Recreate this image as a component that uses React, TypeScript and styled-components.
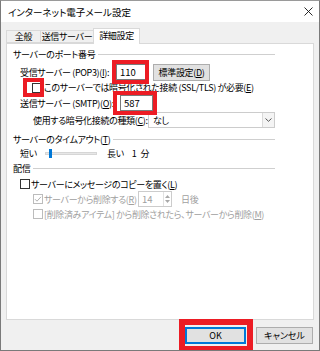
import React from "react";
import styled, { createGlobalStyle } from "styled-components";

const GlobalStyle = createGlobalStyle`
  html, body { margin: 0; padding: 0; background: #ffffff; }
  body {
    font-family: "Noto Sans CJK JP", "Noto Sans", sans-serif;
    font-size: 9px;
    color: #000;
    font-feature-settings: "palt";
    letter-spacing: -0.35px;
  }
  * { box-sizing: border-box; }
`;

const Window = styled.div`
  position: relative;
  width: 320px;
  height: 351px;
  border: 1px solid #7a7a7a;
  border-top-color: #9a9a9a;
  background: #f0f0f0;
  overflow: hidden;
  display: flex;
  flex-direction: column;
`;

const TitleBar = styled.div`
  height: 21px;
  background: #fff;
  display: flex;
  align-items: center;
  justify-content: space-between;
  padding: 0 6px 0 7px;
  font-size: 9.5px;
  letter-spacing: 0;
`;

const Body = styled.div`
  flex: 1;
  display: flex;
  flex-direction: column;
  padding: 6px 5px 0 5px;
`;

const TabStrip = styled.div`
  display: flex;
  align-items: flex-end;
  height: 15px;
  position: relative;
  z-index: 2;
`;

const Tab = styled.div<{ $active?: boolean; $w: number }>`
  width: ${(p) => p.$w}px;
  height: ${(p) => (p.$active ? 16 : 13)}px;
  margin-bottom: ${(p) => (p.$active ? -1 : 0)}px;
  margin-left: -1px;
  border: 1px solid #d9d9d9;
  border-bottom: ${(p) => (p.$active ? "none" : "1px solid #d9d9d9")};
  background: ${(p) => (p.$active ? "#fff" : "#f0f0f0")};
  display: flex;
  align-items: center;
  justify-content: center;
  white-space: nowrap;
  padding-bottom: ${(p) => (p.$active ? 2 : 0)}px;
  &:first-child { margin-left: 0; }
`;

const Panel = styled.div`
  height: 277px;
  background: #fff;
  border: 1px solid #d9d9d9;
  padding: 0 38px 0 6px;
  display: flex;
  flex-direction: column;
`;

const GroupHeader = styled.div<{ $mt: number }>`
  height: 12px;
  margin-top: ${(p) => p.$mt}px;
  display: flex;
  align-items: center;
  white-space: nowrap;
  &::after {
    content: "";
    flex: 1;
    height: 1px;
    background: #cfcfcf;
    margin-left: 3px;
  }
`;

const Row = styled.div<{ $h: number; $mt?: number }>`
  height: ${(p) => p.$h}px;
  margin-top: ${(p) => p.$mt ?? 0}px;
  display: flex;
  align-items: center;
  white-space: nowrap;
`;

const Label = styled.span<{ $ml?: number; $w?: number; $disabled?: boolean }>`
  margin-left: ${(p) => p.$ml ?? 0}px;
  ${(p) => (p.$w ? `width: ${p.$w}px; flex: none;` : "")}
  color: ${(p) => (p.$disabled ? "#a0a0a0" : "#000")};
  white-space: nowrap;
`;

const U = styled.span`
  text-decoration: underline;
  text-underline-offset: 1px;
`;

const TextBox = styled.div<{ $w: number; $h?: number; $disabled?: boolean }>`
  width: ${(p) => p.$w}px;
  height: ${(p) => p.$h ?? 16}px;
  flex: none;
  border: 1px solid ${(p) => (p.$disabled ? "#cccccc" : "#7a7a7a")};
  background: #fff;
  color: ${(p) => (p.$disabled ? "#a0a0a0" : "#000")};
  display: flex;
  align-items: center;
  padding-left: 3px;
  font-size: 9.5px;
  letter-spacing: 0;
`;

const Spinner = styled.div`
  margin-left: auto;
  width: 8px;
  height: 100%;
  display: flex;
  flex-direction: column;
  align-items: center;
  justify-content: center;
  gap: 2px;
  border-left: 1px solid #e2e2e2;
`;

const Button = styled.div<{ $w: number; $default?: boolean; $ml?: number }>`
  width: ${(p) => p.$w}px;
  height: 17px;
  flex: none;
  margin-left: ${(p) => p.$ml ?? 0}px;
  background: #e1e1e1;
  border: 1px solid ${(p) => (p.$default ? "#0078d7" : "#adadad")};
  box-shadow: ${(p) => (p.$default ? "inset 0 0 0 1px #0078d7" : "none")};
  display: flex;
  align-items: center;
  justify-content: center;
  white-space: nowrap;
`;

const Check = styled.div<{ $ml?: number; $disabled?: boolean }>`
  width: 10px;
  height: 10px;
  flex: none;
  margin-left: ${(p) => p.$ml ?? 0}px;
  border: 1px solid ${(p) => (p.$disabled ? "#bcbcbc" : "#333")};
  background: #fff;
  display: flex;
  align-items: center;
  justify-content: center;
`;

const Select = styled.div`
  margin-left: auto;
  width: 127px;
  height: 16px;
  border: 1px solid #cccccc;
  background: #fff;
  display: flex;
  align-items: center;
  padding-left: 4px;
`;

const SelectArrow = styled.div`
  margin-left: auto;
  width: 12px;
  height: 14px;
  border-left: 1px solid #dadada;
  background: #f4f4f4;
  display: flex;
  align-items: center;
  justify-content: center;
`;

const Track = styled.div`
  position: relative;
  width: 52px;
  height: 3px;
  background: #e7e7e7;
  border: 1px solid #d6d6d6;
  flex: none;
`;

const Thumb = styled.div`
  position: absolute;
  left: 3px;
  top: -4px;
  width: 3px;
  height: 9px;
  background: #0078d7;
`;

const Footer = styled.div`
  margin-top: 7px;
  display: flex;
  justify-content: flex-end;
  gap: 10px;
  padding-right: 1px;
  letter-spacing: 0;
`;

const Mark = styled.div<{ $t: number; $r: number; $b: number; $l: number; $bw: number; $ml?: number }>`
  position: relative;
  display: flex;
  flex: none;
  margin-left: ${(p) => p.$ml ?? 0}px;
  &::after {
    content: "";
    position: absolute;
    top: -${(p) => p.$t}px;
    right: -${(p) => p.$r}px;
    bottom: -${(p) => p.$b}px;
    left: -${(p) => p.$l}px;
    border: ${(p) => p.$bw}px solid #ec1c24;
    pointer-events: none;
    z-index: 5;
  }
`;

const CheckMark = ({ color }: { color: string }) => (
  <svg width="8" height="8" viewBox="0 0 8 8">
    <path d="M1 4.2 L3 6.2 L7 1.8" fill="none" stroke={color} strokeWidth="1" />
  </svg>
);

const Chevron = () => (
  <svg width="7" height="4" viewBox="0 0 7 4">
    <path d="M0.5 0.5 L3.5 3.3 L6.5 0.5" fill="none" stroke="#444" strokeWidth="0.9" />
  </svg>
);

const Tri = ({ up }: { up?: boolean }) => (
  <svg width="5" height="3" viewBox="0 0 5 3">
    <path d={up ? "M0 3 L2.5 0 L5 3 Z" : "M0 0 L2.5 3 L5 0 Z"} fill="#a8a8a8" />
  </svg>
);

const CloseIcon = () => (
  <svg width="9" height="9" viewBox="0 0 9 9">
    <path d="M0.5 0.5 L8.5 8.5 M8.5 0.5 L0.5 8.5" stroke="#111" strokeWidth="0.9" />
  </svg>
);

export default function App() {
  return (
    <>
      <GlobalStyle />
      <Window>
        <TitleBar>
          <span>インターネット電子メール設定</span>
          <CloseIcon />
        </TitleBar>
        <Body>
          <TabStrip>
            <Tab $w={35}>全般</Tab>
            <Tab $w={54}>送信サーバー</Tab>
            <Tab $w={47} $active>詳細設定</Tab>
          </TabStrip>
          <Panel>
            <GroupHeader $mt={4}>サーバーのポート番号</GroupHeader>
            <Row $h={16} $mt={4}>
              <Label $ml={7} $w={96}>
                受信サーバー (POP3)(<U>I</U>):
              </Label>
              <Mark $t={4} $r={3} $b={4} $l={4} $bw={4}>
                <TextBox $w={30}>110</TextBox>
              </Mark>
              <Button $w={57} $ml={7}>
                標準設定(<U>D</U>)
              </Button>
            </Row>
            <Row $h={15}>
              <Mark $t={5} $r={2} $b={4} $l={9} $bw={4} $ml={19}>
                <Check />
              </Mark>
              <Label $ml={2}>
                このサーバーでは暗号化された接続 (SSL/TLS) が必要(<U>E</U>)
              </Label>
            </Row>
            <Row $h={16}>
              <Label $ml={7} $w={100}>
                送信サーバー (SMTP)(<U>O</U>):
              </Label>
              <Mark $t={4} $r={4} $b={4} $l={7} $bw={4}>
                <TextBox $w={33}>587</TextBox>
              </Mark>
            </Row>
            <Row $h={16} $mt={1}>
              <Label $ml={20}>
                使用する暗号化接続の種類(<U>C</U>):
              </Label>
              <Select>
                なし
                <SelectArrow>
                  <Chevron />
                </SelectArrow>
              </Select>
            </Row>
            <GroupHeader $mt={5}>
              サーバーのタイムアウト(<U>T</U>)
            </GroupHeader>
            <Row $h={14} $mt={1}>
              <Label $ml={7} $w={25}>
                短い
              </Label>
              <Track>
                <Thumb />
              </Track>
              <Label $ml={10}>長い</Label>
              <Label $ml={8}>1</Label>
              <Label $ml={4}>分</Label>
            </Row>
            <GroupHeader $mt={2}>配信</GroupHeader>
            <Row $h={14} $mt={3}>
              <Check $ml={7} />
              <Label $ml={1}>
                サーバーにメッセージのコピーを置く(<U>L</U>)
              </Label>
            </Row>
            <Row $h={16}>
              <Check $ml={20} $disabled>
                <CheckMark color="#b0b0b0" />
              </Check>
              <Label $ml={1} $w={94} $disabled>
                サーバーから削除する(<U>R</U>)
              </Label>
              <TextBox $w={34} $disabled>
                14
                <Spinner>
                  <Tri up />
                  <Tri />
                </Spinner>
              </TextBox>
              <Label $ml={9} $disabled>
                日後
              </Label>
            </Row>
            <Row $h={14}>
              <Check $ml={20} $disabled />
              <Label $ml={1} $disabled>
                [削除済みアイテム] から削除されたら、サーバーから削除(<U>M</U>)
              </Label>
            </Row>
          </Panel>
          <Footer>
            <Mark $t={8} $r={7} $b={8} $l={6} $bw={6}>
              <Button $w={61} $default>
                OK
              </Button>
            </Mark>
            <Button $w={57}>キャンセル</Button>
          </Footer>
        </Body>
      </Window>
    </>
  );
}
